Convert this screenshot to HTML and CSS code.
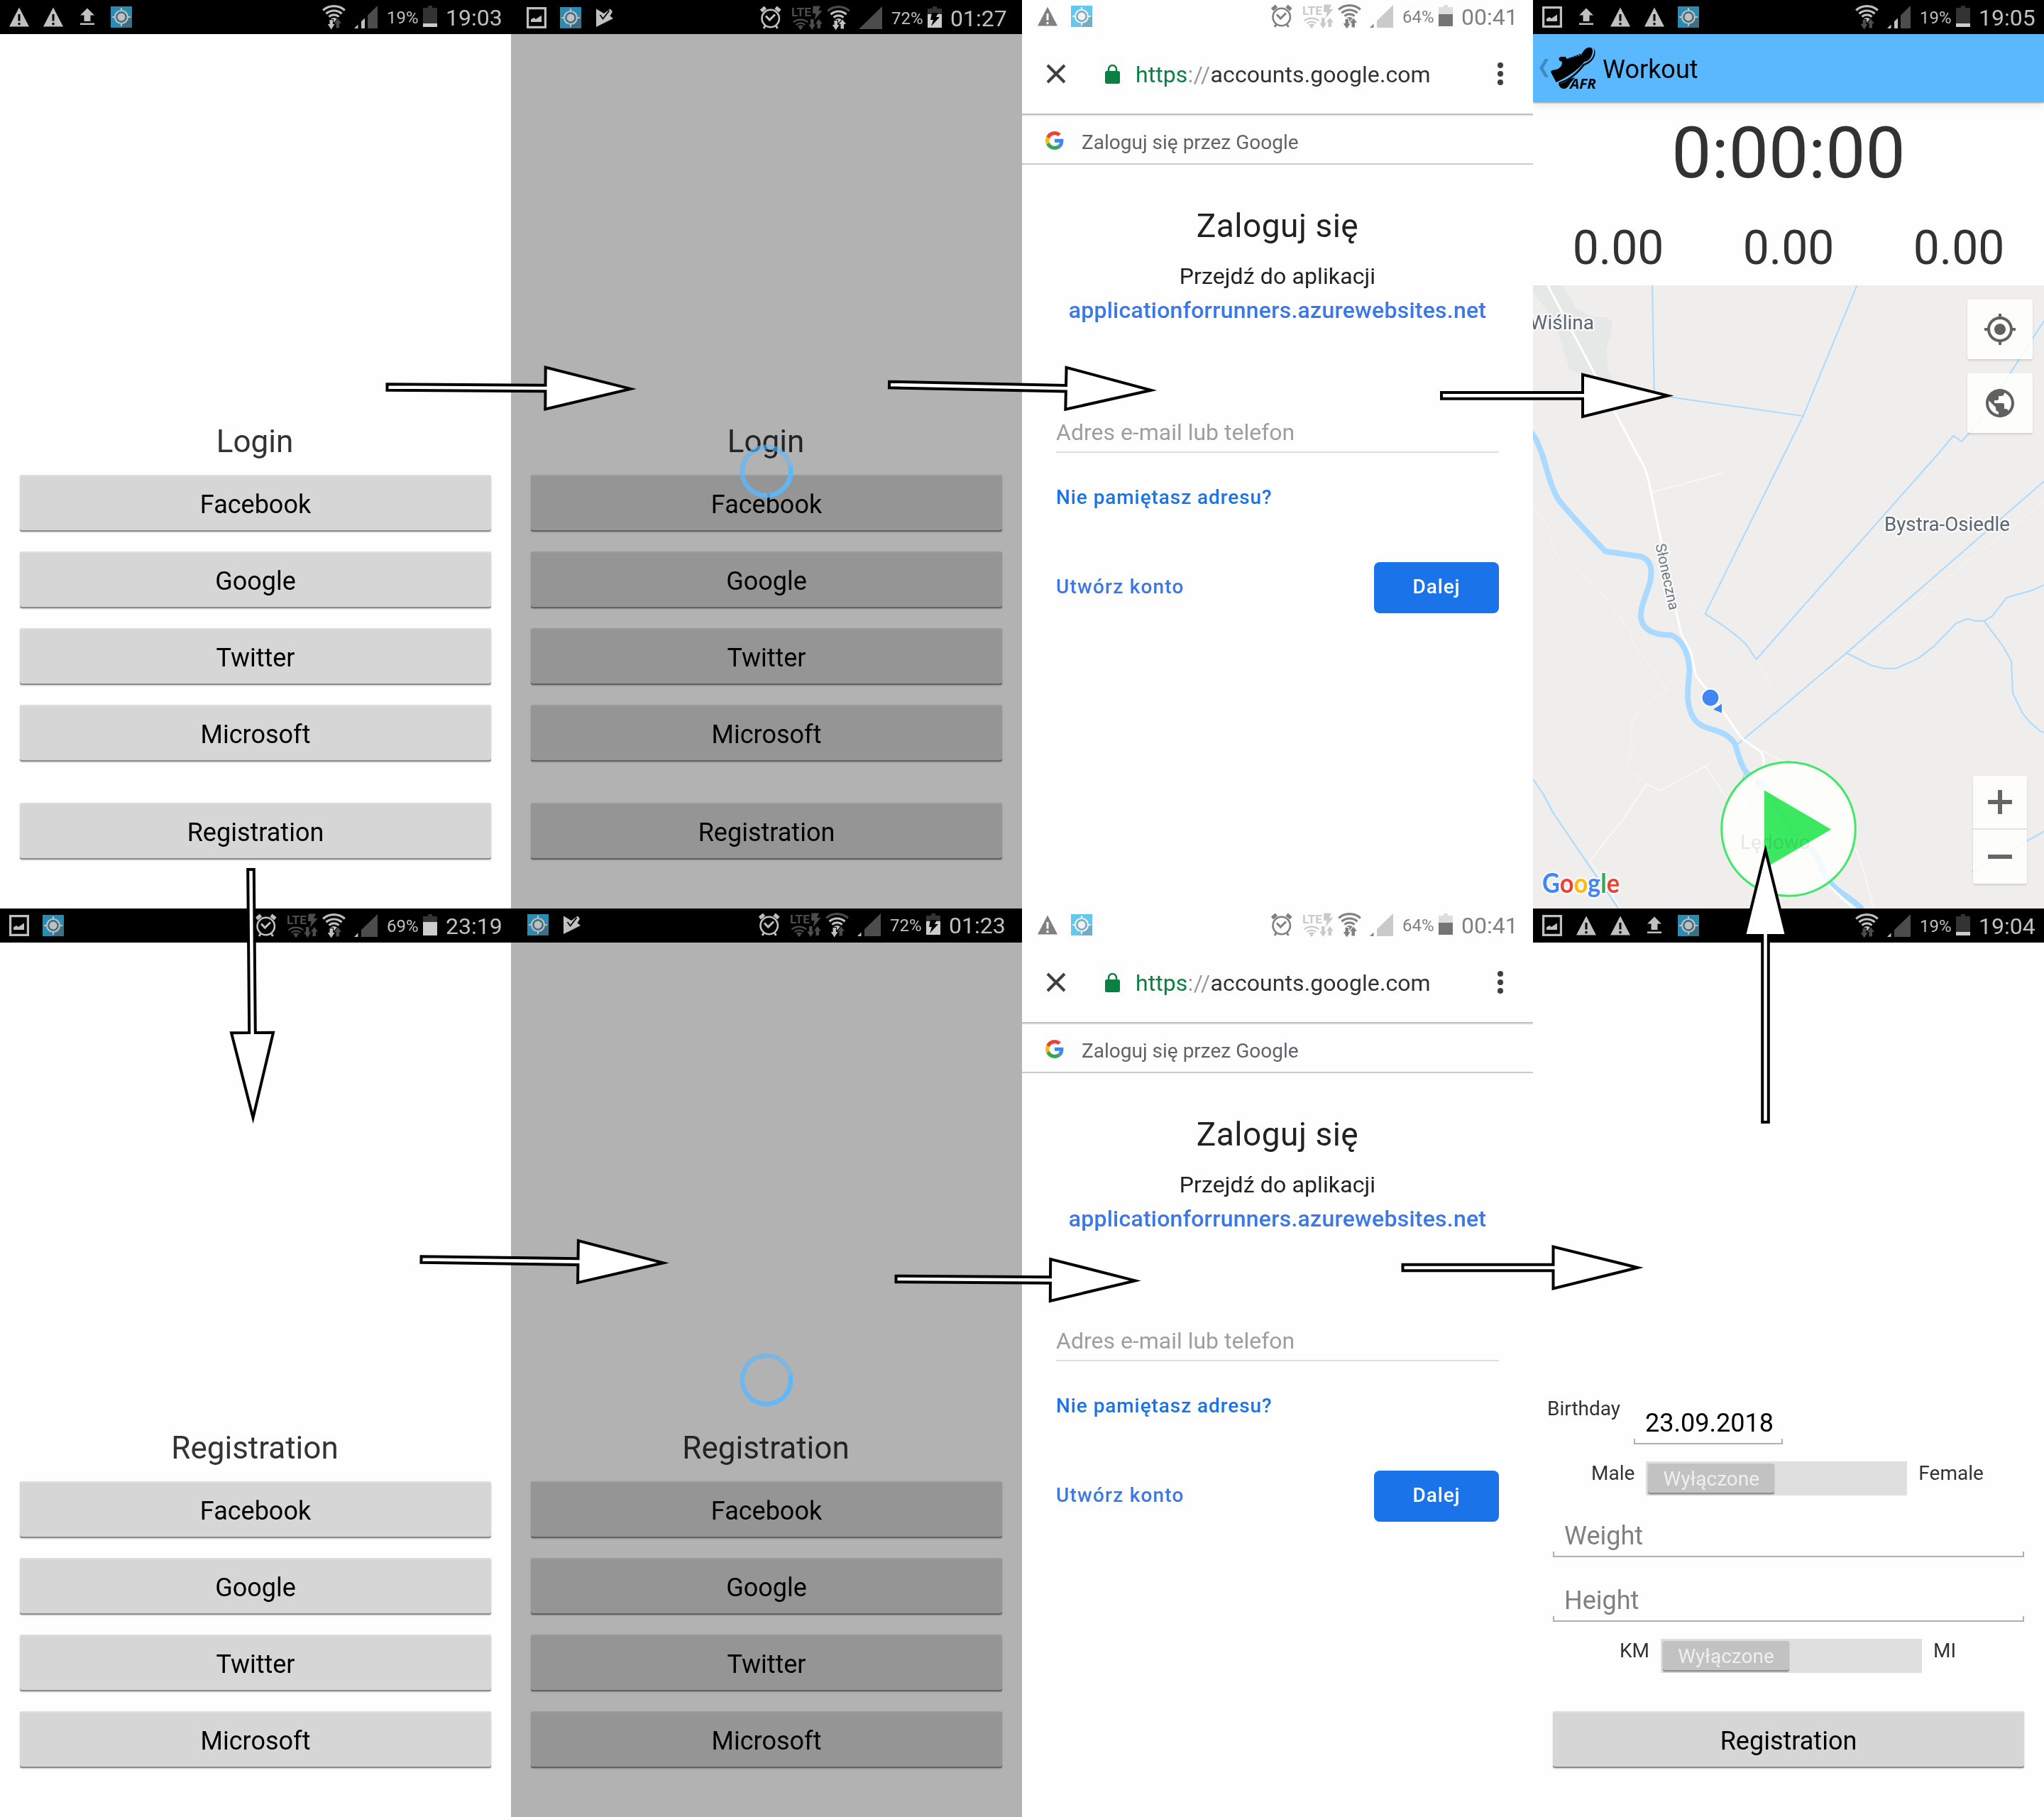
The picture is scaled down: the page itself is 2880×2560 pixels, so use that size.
FILE: index.html
```html
<!DOCTYPE html>
<html lang="pl">
<head>
<meta charset="utf-8">
<title>Application For Runners</title>
<link rel="stylesheet" href="styles.css">
</head>
<body>
<svg class="defs" width="0" height="0">
  <symbol id="warn" viewBox="0 0 36 36"><path fill="currentColor" d="M18 4.5 32 31.5H4z"/><path class="bar-stroke" d="M18 14v9.5M18 26v3.2" stroke-width="3"/></symbol>
  <symbol id="upload" viewBox="0 0 36 36"><path fill="currentColor" d="M18 5.500 28 15.500h-5.500V24h-9v-8.500H8zM8 26.500h20v2.500H8z"/></symbol>
  <symbol id="image" viewBox="0 0 36 36"><path fill="none" stroke="currentColor" stroke-width="3.200" d="M5.600 4.600h24.800v26.800H5.600z"/><path fill="currentColor" d="M10 24v-3.500l4-2.500 3 2 8-5.500V24z"/></symbol>
  <symbol id="target" viewBox="0 0 36 36"><path fill="var(--tile)" d="M3 3h30v30H3z"/><path fill="var(--tile-shade)" d="M24.500 11.500 33 20v13H19l-7.500-8.500z"/><circle cx="18" cy="18" r="9" fill="var(--tile-shade)" stroke="currentColor" stroke-width="2.200"/><circle cx="18" cy="18" r="5.400" fill="currentColor"/><path stroke="currentColor" stroke-width="2.200" d="M18 5v4M18 27v4M5 18h4M27 18h4"/></symbol>
  <symbol id="play" viewBox="0 0 36 36"><path fill="currentColor" d="M6 5.500 17 12l9-6.500 3 4-3.500 6 4.500 3.500L6 31z"/><path class="bar-stroke" fill="none" stroke-width="1.800" d="m11.500 14 4 5.500L24.500 8"/></symbol>
  <symbol id="alarm" viewBox="0 0 30 48"><g fill="none" stroke="currentColor"><circle cx="14.700" cy="25" r="12.200" stroke-width="2.600"/><path stroke-width="3" d="m8 21.500 5.300 5.500L21 19.500"/><path stroke-width="5" d="M1.500 14.500 7.500 9.500M28 14.500 22 9.500"/><path stroke-width="3" d="m7.500 35-2.500 4M22 35l2.500 4"/></g></symbol>
  <symbol id="lte" viewBox="0 0 44 48"><g fill="var(--dim)"><text class="lte-text" x="0" y="21.700" textLength="28" lengthAdjust="spacingAndGlyphs">LTE</text><path d="M30.500 7.500H41L38 14h5.500L32.700 27l2-9H30zM27 26h4.500v7.500H34L29.300 41l-5-7.500H27zM36.500 39v-6.500H34L38.800 26l5 6.500H41V39z"/><circle cx="13" cy="38.500" r="2"/></g><g fill="none" stroke="var(--dim)" stroke-width="2.200"><path d="M2.700 30.500a15.500 15.500 0 0 1 20.600 0M6.500 34a10 10 0 0 1 13 0M9.500 36.800a6 6 0 0 1 7 0"/></g></symbol>
  <symbol id="wifi" viewBox="0 0 33 48"><g fill="none" stroke="currentColor" stroke-width="3.200"><path stroke="var(--outer, currentColor)" d="M1.200 14.500a23 23 0 0 1 30.600 0"/><path d="M5.500 19.200a16.500 16.500 0 0 1 22 0M9.500 23.600a10.500 10.500 0 0 1 14 0"/></g><path fill="currentColor" d="M11.500 27a8 8 0 0 1 10 0l-5 4.500z"/><path class="bar-stroke" stroke-width="2" fill="var(--down, currentColor)" paint-order="stroke" d="M10.500 28H15v6h2.600L12.700 41.500l-5-7.500h2.800z"/><path class="bar-stroke" stroke-width="2" fill="var(--up, currentColor)" paint-order="stroke" d="M19.500 39.500v-6.500H17L22 26.500l5 6.500h-3v6.500z"/></symbol>
  <symbol id="sig0" viewBox="0 0 33 48"><path fill="var(--dim)" d="M0 40 33 8v32z"/></symbol>
  <symbol id="sig1" viewBox="0 0 33 48"><path fill="var(--dim)" d="M10 30.300 33 8v32H10z"/><path fill="currentColor" d="M0 40l5.500-5.400V40z"/></symbol>
  <symbol id="sig2" viewBox="0 0 33 48"><path fill="var(--dim)" d="M19 21.600 33 8v32H19z"/><path fill="currentColor" d="M0 40l5.500-5.400V40zM10 40v-9.700l5-4.800V40z"/></symbol>
  <symbol id="bolt" viewBox="0 0 20 48"><path class="bolt" d="M6 17h9l-3 6h5L5 36l3-9H4z"/></symbol>
  <symbol id="glogo" viewBox="0 0 48 48"><path fill="#ea4335" d="M24 9.500c3.540 0 6.710 1.220 9.210 3.600l6.850-6.850C35.900 2.380 30.470 0 24 0 14.620 0 6.510 5.380 2.560 13.220l7.980 6.190C12.430 13.720 17.740 9.500 24 9.500z"/><path fill="#4285f4" d="M46.980 24.550c0-1.570-.15-3.090-.38-4.550H24v9.020h12.940c-.58 2.960-2.260 5.480-4.780 7.180l7.730 6c4.510-4.180 7.090-10.360 7.090-17.650z"/><path fill="#fbbc05" d="M10.530 28.590c-.48-1.450-.76-2.990-.76-4.590s.27-3.140.76-4.590l-7.980-6.190C.92 16.460 0 20.120 0 24c0 3.880.92 7.540 2.560 10.780l7.970-6.190z"/><path fill="#34a853" d="M24 48c6.480 0 11.930-2.130 15.890-5.810l-7.730-6c-2.150 1.450-4.920 2.300-8.160 2.300-6.260 0-11.570-4.220-13.470-9.910l-7.980 6.190C6.510 42.620 14.620 48 24 48z"/></symbol>
</svg>

<main class="board">
  <!-- Login -->
  <section class="phone">
    <header class="status">
      <div class="notes"><svg><use href="#warn"/></svg><svg><use href="#warn"/></svg><svg><use href="#upload"/></svg><svg><use href="#target"/></svg></div>
      <div class="sys"><svg class="wifi up-dim"><use href="#wifi"/></svg><svg class="sig"><use href="#sig2"/></svg><span class="pct">19%</span><span class="batt b19"></span><span class="time">19:03</span></div>
    </header>
    <div class="choices">
      <h1 class="heading">Login</h1>
      <button class="btn">Facebook</button><button class="btn">Google</button><button class="btn">Twitter</button><button class="btn">Microsoft</button>
      <button class="btn apart">Registration</button>
    </div>
  </section>

  <!-- Login, loading -->
  <section class="phone dimmed">
    <header class="status low shift">
      <div class="notes"><svg><use href="#image"/></svg><svg><use href="#target"/></svg><svg><use href="#play"/></svg></div>
      <div class="sys"><svg class="alarm"><use href="#alarm"/></svg><svg class="lte"><use href="#lte"/></svg><svg class="wifi outer-dim"><use href="#wifi"/></svg><svg class="sig"><use href="#sig0"/></svg><span class="pct">72%</span><span class="batt b72"><svg><use href="#bolt"/></svg></span><span class="time">01:27</span></div>
    </header>
    <div class="choices">
      <h1 class="heading">Login</h1>
      <button class="btn">Facebook</button><button class="btn">Google</button><button class="btn">Twitter</button><button class="btn">Microsoft</button>
      <button class="btn apart">Registration</button>
    </div>
    <div class="spinner"></div>
  </section>

  <!-- Google account, login -->
  <section class="phone">
    <header class="status light high shift">
      <div class="notes"><svg><use href="#warn"/></svg><svg><use href="#target"/></svg></div>
      <div class="sys"><svg class="alarm"><use href="#alarm"/></svg><svg class="lte"><use href="#lte"/></svg><svg class="wifi"><use href="#wifi"/></svg><svg class="sig"><use href="#sig1"/></svg><span class="pct">64%</span><span class="batt b64"></span><span class="time">00:41</span></div>
    </header>
    <div class="toolbar">
      <svg class="close" viewBox="0 0 28 28"><path d="m2 2 24 24M26 2 2 26"/></svg>
      <svg class="lock" viewBox="0 0 21 27"><rect y="9" width="21" height="18" rx="2.500"/><path d="M5 10V6.500a5.500 5.500 0 0 1 11 0V10"/></svg>
      <p class="url"><span class="scheme">https</span><span class="slashes">://</span>accounts.google.com</p>
      <svg class="dots" viewBox="0 0 8 32"><circle cx="4" cy="4" r="4"/><circle cx="4" cy="16" r="4"/><circle cx="4" cy="28" r="4"/></svg>
    </div>
    <div class="provider"><svg><use href="#glogo"/></svg><span>Zaloguj się przez Google</span></div>
    <div class="account">
      <h1>Zaloguj się</h1>
      <p class="sub">Przejdź do aplikacji</p>
      <p class="site">applicationforrunners.azurewebsites.net</p>
      <div class="email">Adres e-mail lub telefon</div>
      <p class="forgot">Nie pamiętasz adresu?</p>
      <div class="actions"><span class="create">Utwórz konto</span><button class="next">Dalej</button></div>
    </div>
  </section>

  <!-- Workout -->
  <section class="phone">
    <header class="status">
      <div class="notes"><svg><use href="#image"/></svg><svg><use href="#upload"/></svg><svg><use href="#warn"/></svg><svg><use href="#warn"/></svg><svg><use href="#target"/></svg></div>
      <div class="sys"><svg class="wifi up-dim down-dim"><use href="#wifi"/></svg><svg class="sig"><use href="#sig2"/></svg><span class="pct">19%</span><span class="batt b19"></span><span class="time">19:05</span></div>
    </header>
    <div class="appbar">
      <svg class="back" viewBox="0 0 14 28"><path d="M8.500 0H14L6 14l8 14H8.500L0 14z"/></svg>
      <svg class="shoe" viewBox="75 198 195 180">
        <path d="M110 246c2-8 16-6 28-6l4 9 66-25c8-12 16-24 32-24 12 0 14 12 10 28-5 20-18 30-34 34-14 20-50 55-118 86L76 306c-2-10 10-9 22-12 18-6 28-20 24-34-8-1-14-6-12-14z"/>
        <path class="laces" d="m147 234 3 13M158 231l3 13M169 229l3 13M180 226l3 13M191 224l3 13M201 220l3 13"/>
        <path d="M257 203c9 15 8 35-9 54-10 11-22 15-32 21-22 30-56 62-106 76l-2-5c44-14 78-42 104-78 12-6 22-9 32-19 13-14 17-32 13-49z"/>
        <path d="M108 354c18-2 34-12 50-22l18-4c-10 16-18 20-24 32-8 16-24 18-34 11-6-4-8-10-10-17z"/>
        <text x="157" y="375" textLength="110" lengthAdjust="spacingAndGlyphs">AFR</text>
      </svg>
      <h1>Workout</h1>
    </div>
    <div class="clock">0:00:00</div>
    <div class="stats"><span>0.00</span><span>0.00</span><span>0.00</span></div>
    <div class="map">
      <svg class="tiles" viewBox="0 402 720 878">
        <g transform="translate(0 640) scale(.45918 .40816)" fill="none" stroke-linejoin="round">
          <path fill="#e6e7e7" d="M0-583h92l38 75q25 20 60 35h35l17 12v30l-17 70 5 70 20 40-90-20-48-20-32-120-40-90-40-57z"/>
          <g class="path">
            <path d="m0 175 48 75 10 60 17 40 115 100 110 165 10 40 103 160-60 40q-40 40-50 75l-3 40 5 50-20 50 20 30 45 38M445 490l83 61M685 708l50 105M1568 165 770 868M528 1077l92-74"/>
          </g>
          <g class="lane">
            <path d="m362 132 218-66M268 1568l-93-164 105-149 70-117 40 23 138-84 62 103q25 35 75 40M700 1022l70 38 140 50 35 70 45 180 25 80 30 128"/>
          </g>
          <g class="water">
            <path d="m366-583 6 378 457 73M994-583 829-132 771 0 528 551q100 70 132 114l25 43L1242 0l48-64 25 20 25-31 60-90 90-160 78-135M1568 93 962 686 770 868 625 1003M962 686l76 43 37 10h40l68-35 47-41 68-79 34-16 25 7h27l25-16 44-64 80-26 35-18M1384 575l59 89 25 51 4 110 31 70 20 28 34 34 11 3M0 1122l30 48 30 65 100 165 102 168M1347 1442l221-140M650 1100l-12 40-15 42"/>
          </g>
          <path class="river" d="M-14-90 10-50 28 0C45 60 55 115 80 160c40 55 95 120 142 175l108 18c35 12 36 50 30 85-10 45-35 95-28 132 8 40 40 52 93 55 35 15 55 70 55 125-5 60-12 110 10 155 30 60 90 30 130 95 12 45 20 80 40 105l40 35c60 60 70 160 150 220 40 40 30 90 80 140 30 25 60 45 80 70"/>
          <path class="road" d="M45-583 320 0c30 55 32 80 42 130l33 180 45 235 15 75 30 65 15 80 60 85 80 130 60 48c15 30 8 65-20 95-30 30-45 60-20 95l55 67 270 285"/>
        </g>
        <g class="labels">
          <text x="86" y="463.500" text-anchor="end">Wiślina</text>
          <text x="495" y="748" textLength="177" lengthAdjust="spacingAndGlyphs">Bystra-Osiedle</text>
          <text class="street" transform="translate(172.500 767.500) rotate(78)">Słoneczna</text>
          <text x="292" y="1195.500">Lędowo</text>
        </g>
        <circle cx="250" cy="983" r="12.300" fill="#4285f4" stroke="#fff" stroke-width="1.800"/>
        <path fill="#4285f4" d="m266 991.500v13l-12-5z"/>
        <text class="brand" x="13" y="1258" textLength="109" lengthAdjust="spacingAndGlyphs"><tspan fill="#4285f4">G</tspan><tspan fill="#ea4335">o</tspan><tspan fill="#fbbc05">o</tspan><tspan fill="#4285f4">g</tspan><tspan fill="#34a853">l</tspan><tspan fill="#ea4335">e</tspan></text>
        <circle class="start-ring" cx="360" cy="1168" r="94.300"/>
        <path class="start-arrow" d="m326 1113.500 94 55-94 55z"/>
      </svg>
      <div class="mapbtn locate"><svg viewBox="0 0 24 24"><path d="M12 8c-2.210 0-4 1.790-4 4s1.790 4 4 4 4-1.790 4-4-1.790-4-4-4zm8.940 3c-.46-4.170-3.770-7.480-7.940-7.940V1h-2v2.060C6.830 3.520 3.520 6.830 3.060 11H1v2h2.060c.46 4.170 3.770 7.480 7.940 7.940V23h2v-2.060c4.170-.46 7.480-3.770 7.940-7.940H23v-2h-2.060zM12 19c-3.870 0-7-3.130-7-7s3.130-7 7-7 7 3.130 7 7-3.130 7-7 7z"/></svg></div>
      <div class="mapbtn globe"><svg viewBox="0 0 24 24"><path d="M12 2C6.480 2 2 6.480 2 12s4.480 10 10 10 10-4.480 10-10S17.520 2 12 2zm-1 17.930c-3.950-.49-7-3.850-7-7.930 0-.62.08-1.210.21-1.790L9 15v1c0 1.100.9 2 2 2v1.930zm6.900-2.540c-.26-.81-1-1.390-1.900-1.390h-1v-3c0-.55-.45-1-1-1H8v-2h2c.55 0 1-.45 1-1V7h2c1.100 0 2-.9 2-2v-.41c2.930 1.190 5 4.060 5 7.410 0 2.080-.8 3.970-2.100 5.390z"/></svg></div>
      <div class="zoom"><span class="plus"></span><span class="minus"></span></div>
    </div>
  </section>

  <!-- Registration -->
  <section class="phone">
    <header class="status">
      <div class="notes"><svg><use href="#image"/></svg><svg><use href="#target"/></svg></div>
      <div class="sys"><svg class="alarm"><use href="#alarm"/></svg><svg class="lte"><use href="#lte"/></svg><svg class="wifi up-dim"><use href="#wifi"/></svg><svg class="sig"><use href="#sig1"/></svg><span class="pct">69%</span><span class="batt b69"></span><span class="time">23:19</span></div>
    </header>
    <div class="choices">
      <h1 class="heading">Registration</h1>
      <button class="btn">Facebook</button><button class="btn">Google</button><button class="btn">Twitter</button><button class="btn">Microsoft</button>
    </div>
  </section>

  <!-- Registration, loading -->
  <section class="phone dimmed">
    <header class="status high shift-more">
      <div class="notes"><svg><use href="#target"/></svg><svg><use href="#play"/></svg></div>
      <div class="sys"><svg class="alarm"><use href="#alarm"/></svg><svg class="lte"><use href="#lte"/></svg><svg class="wifi outer-dim up-dim"><use href="#wifi"/></svg><svg class="sig"><use href="#sig1"/></svg><span class="pct">72%</span><span class="batt b72"><svg><use href="#bolt"/></svg></span><span class="time">01:23</span></div>
    </header>
    <div class="choices">
      <h1 class="heading">Registration</h1>
      <button class="btn">Facebook</button><button class="btn">Google</button><button class="btn">Twitter</button><button class="btn">Microsoft</button>
    </div>
    <div class="spinner"></div>
  </section>

  <!-- Google account, registration -->
  <section class="phone">
    <header class="status light high shift">
      <div class="notes"><svg><use href="#warn"/></svg><svg><use href="#target"/></svg></div>
      <div class="sys"><svg class="alarm"><use href="#alarm"/></svg><svg class="lte"><use href="#lte"/></svg><svg class="wifi"><use href="#wifi"/></svg><svg class="sig"><use href="#sig1"/></svg><span class="pct">64%</span><span class="batt b64"></span><span class="time">00:41</span></div>
    </header>
    <div class="toolbar">
      <svg class="close" viewBox="0 0 28 28"><path d="m2 2 24 24M26 2 2 26"/></svg>
      <svg class="lock" viewBox="0 0 21 27"><rect y="9" width="21" height="18" rx="2.500"/><path d="M5 10V6.500a5.500 5.500 0 0 1 11 0V10"/></svg>
      <p class="url"><span class="scheme">https</span><span class="slashes">://</span>accounts.google.com</p>
      <svg class="dots" viewBox="0 0 8 32"><circle cx="4" cy="4" r="4"/><circle cx="4" cy="16" r="4"/><circle cx="4" cy="28" r="4"/></svg>
    </div>
    <div class="provider"><svg><use href="#glogo"/></svg><span>Zaloguj się przez Google</span></div>
    <div class="account">
      <h1>Zaloguj się</h1>
      <p class="sub">Przejdź do aplikacji</p>
      <p class="site">applicationforrunners.azurewebsites.net</p>
      <div class="email">Adres e-mail lub telefon</div>
      <p class="forgot">Nie pamiętasz adresu?</p>
      <div class="actions"><span class="create">Utwórz konto</span><button class="next">Dalej</button></div>
    </div>
  </section>

  <!-- Runner details -->
  <section class="phone">
    <header class="status">
      <div class="notes"><svg><use href="#image"/></svg><svg><use href="#warn"/></svg><svg><use href="#warn"/></svg><svg><use href="#upload"/></svg><svg><use href="#target"/></svg></div>
      <div class="sys"><svg class="wifi up-dim down-dim"><use href="#wifi"/></svg><svg class="sig"><use href="#sig1"/></svg><span class="pct">19%</span><span class="batt b19"></span><span class="time">19:04</span></div>
    </header>
    <div class="details">
      <div class="row birthday"><label>Birthday</label><div class="field date">23.09.2018</div></div>
      <div class="row sex"><label>Male</label><div class="switch"><span>Wyłączone</span></div><label>Female</label></div>
      <div class="field weight">Weight</div>
      <div class="field height">Height</div>
      <div class="row unit"><label>KM</label><div class="switch"><span>Wyłączone</span></div><label>MI</label></div>
      <button class="btn">Registration</button>
    </div>
  </section>

  <!-- Flow arrows between the screens -->
  <svg class="arrows" viewBox="0 0 2880 2560">
    <path transform="translate(545.500 545.500) rotate(.4)" d="M0-4.300H223V-29.500L343 0 223 29.500V4.300H0z"/>
    <path transform="translate(1253 542) rotate(1.200)" d="M0-4.300H249V-29.500L369 0 249 29.500V4.300H0z"/>
    <path transform="translate(2031 557.400)" d="M0-4.300H199V-29.500L319 0 199 29.500V4.300H0z"/>
    <path transform="translate(353.500 1225) rotate(89.500)" d="M0-4.300H230V-29.500L350 0 230 29.500V4.300H0z"/>
    <path transform="translate(2487.500 1581) rotate(-90)" d="M0-4.300H263V-29.500L383 0 263 29.500V4.300H0z"/>
    <path transform="translate(593.500 1774.500) rotate(.8)" d="M0-4.300H221V-29.500L341 0 221 29.500V4.300H0z"/>
    <path transform="translate(1262.500 1802) rotate(.4)" d="M0-4.300H217.500V-29.500L337 0 217.500 29.500V4.300H0z"/>
    <path transform="translate(1976.500 1786)" d="M0-4.300H212V-29.500L331 0 212 29.500V4.300H0z"/>
  </svg>
</main>
</body>
</html>
```
FILE: styles.css
```css
* { box-sizing: border-box; margin: 0; }
body { background: #fff; font-family: Roboto, "Noto Sans", sans-serif; font-weight: 400; }
button { border: 0; font: inherit; padding: 0; }
.defs { display: none; }

.board {
  position: relative;
  display: grid;
  grid-template-columns: repeat(4, 720px);
  grid-template-rows: repeat(2, 1280px);
  width: 2880px;
}
.phone { position: relative; display: flex; flex-direction: column; overflow: hidden; background: #fefefe; }
.phone.dimmed { background: #b2b2b2; }

/* Status bar */
.status {
  --bar: #000;
  --dim: #4c4c4c;
  --tile: #2a8bb3;
  --tile-shade: #3d6f85;
  --level: #ccc;
  --empty: #333;
  flex: none;
  display: flex;
  justify-content: space-between;
  height: 48px;
  padding: 0 12px 0 3px;
  background: var(--bar);
  color: #c0c0c0;
}
.status.light {
  --bar: #fefefe;
  --dim: #cacaca;
  --tile: #62c8f0;
  --tile-shade: #73abc4;
  --level: #757575;
  --empty: #dedede;
  color: #808080;
}
.status.light .notes svg:last-child { color: #f2f2f2; }
.status.shift { padding-left: 12px; padding-right: 21px; }
.status.shift-more { padding-left: 14px; padding-right: 23px; }
.status.low > div { margin-top: 1px; }
.status.high > div { margin-top: -1px; }
.notes { display: flex; gap: 12px; padding: 6px; }
.notes svg { width: 36px; height: 36px; }
.sys { display: flex; height: 48px; }
.sys > svg { height: 48px; }
.alarm { width: 30px; margin-right: 14px; }
.lte { width: 44px; margin-right: 6px; }
.wifi { width: 33px; margin-right: 12px; }
.sig { width: 33px; margin-right: 13px; }
.up-dim { --up: var(--dim); }
.down-dim { --down: var(--dim); }
.outer-dim { --outer: var(--dim); }
.bar-stroke { stroke: var(--bar); }
.lte-text { font: 700 16.5px Roboto, sans-serif; }
.pct { width: 43px; margin-right: 8px; font-size: 24px; line-height: 51px; white-space: nowrap; }
.time { width: 80px; font-size: 32px; line-height: 50px; white-space: nowrap; }
.batt {
  position: relative;
  width: 20px;
  height: 27px;
  margin: 11px 12px 0 0;
  background: linear-gradient(to top, var(--level) var(--charge), var(--empty) var(--charge));
}
.batt::before { content: ""; position: absolute; left: 7px; top: -3px; width: 6px; height: 3px; background: var(--empty); }
.batt svg { position: absolute; left: 0; top: -11px; width: 20px; height: 48px; }
.bolt { fill: #000; }
.b19 { --charge: 19%; }
.b64 { --charge: 64%; }
.b69 { --charge: 69%; }
.b72 { --charge: 72%; }

/* Provider choice */
.choices { flex: 1; display: flex; flex-direction: column; justify-content: flex-end; gap: 28px; padding: 0 28px 69px; }
.heading { height: 40px; padding-right: 2px; font-size: 44px; font-weight: 400; line-height: 42px; text-align: center; color: #333; }
.dimmed .heading { color: #242424; }
.btn {
  width: 664px;
  height: 80px;
  border-radius: 3px;
  background: #d6d6d6;
  box-shadow: inset 0 -2px #8c8c8c, inset 0 2px #dedede, 0 1px 2px rgba(0, 0, 0, .22);
  color: #000;
  font-size: 36px;
  line-height: 84px;
  text-align: center;
}
.btn.apart { margin-top: 30px; }
.dimmed .btn { background: #959595; box-shadow: inset 0 -2px #626262, inset 0 2px #9b9b9b, 0 1px 2px rgba(0, 0, 0, .22); }
.spinner {
  position: absolute;
  left: 322px;
  top: 626px;
  width: 76px;
  height: 76px;
  border-radius: 50%;
  background: conic-gradient(from 78deg, #5ab8ff, rgba(90, 184, 255, .5));
  mask: radial-gradient(circle closest-side, transparent 80%, #000 82%, #000 98%, transparent 100%);
}

/* Google account page */
.toolbar { flex: none; display: flex; align-items: center; height: 112px; padding: 0 42px 0 34px; }
.close { width: 28px; height: 28px; fill: none; stroke: #3c4043; stroke-width: 4; }
.lock { width: 21px; height: 27px; margin-left: 55px; fill: #0b8043; }
.lock path { fill: none; stroke: #0b8043; stroke-width: 2.5; }
.url { margin-left: 22px; padding-top: 2px; font-size: 32px; line-height: 40px; letter-spacing: .08px; color: #303134; }
.scheme { color: #0b8043; }
.slashes { letter-spacing: .5px; color: #999; }
.dots { width: 8px; height: 32px; margin-left: auto; fill: #3c4043; }
.provider {
  flex: none;
  display: flex;
  align-items: center;
  height: 72px;
  padding: 4px 0 0 33px;
  border-top: 2px solid #c2c2c2;
  border-bottom: 2px solid #cacaca;
  box-shadow: inset 0 2px 2px -1px #ddd;
  color: #5f6368;
  font-size: 28px;
  line-height: 36px;
}
.provider svg { width: 26px; height: 26px; margin-right: 25px; }
.provider span { padding-top: 5px; }
.account { display: flex; flex-direction: column; padding: 56px 48px 0; }
.account h1 { font-size: 46px; font-weight: 400; line-height: 60px; letter-spacing: .5px; text-align: center; color: #202124; }
.sub { margin-top: 17px; font-size: 32px; line-height: 48px; letter-spacing: .12px; text-align: center; color: #202124; }
.site { font-size: 32px; font-weight: 500; line-height: 48px; letter-spacing: .24px; text-align: center; color: #3b78e7; }
.email { height: 58px; margin-top: 119px; border-bottom: 2px solid #dedede; font-size: 32px; line-height: 58px; color: #9e9e9e; }
.forgot { margin-top: 43px; font-size: 28px; font-weight: 500; line-height: 40px; letter-spacing: .92px; color: #1a73e8; }
.actions { display: flex; align-items: center; justify-content: space-between; margin-top: 71px; font-size: 28px; font-weight: 500; }
.create { padding-bottom: 4px; letter-spacing: 1.2px; color: #3b78e7; }
.next { width: 176px; height: 72px; padding-bottom: 4px; border-radius: 8px; background: #1a73e8; color: #fff; letter-spacing: .9px; }

/* Workout */
.appbar { flex: none; position: relative; z-index: 1; display: flex; align-items: center; height: 96px; padding-left: 9px; background: #5ab8ff; box-shadow: 0 1px 2px rgba(0, 0, 0, .35), 0 6px 10px rgba(0, 0, 0, .07); }
.back { width: 13px; height: 28px; fill: #4389bd; }
.shoe { width: 65px; height: 60px; margin-left: 3px; overflow: visible; }
.shoe text { font: italic 700 60px "Open Sans", sans-serif; }
.laces { stroke: #5ab8ff; stroke-width: 3.5; }
.appbar h1 { margin-left: 8px; padding-top: 4px; font-size: 36px; font-weight: 400; line-height: 92px; }
.clock { height: 140px; font-size: 100px; line-height: 143px; text-align: center; color: #323232; }
.stats { display: grid; grid-template-columns: repeat(3, 1fr); height: 118px; font-size: 66px; line-height: 132px; text-align: center; color: #323232; }
.map { position: relative; flex: 1; background: #efeeec; overflow: hidden; }
.tiles { display: block; width: 720px; height: 878px; }
.tiles path { vector-effect: non-scaling-stroke; }
.water { stroke: #aadaff; stroke-width: 2; }
.river { stroke: #aadaff; stroke-width: 8; }
.road { stroke: #fff; stroke-width: 3; }
.lane { stroke: #fafafa; stroke-width: 1.5; }
.path { stroke: #f5f4f3; stroke-width: 1.2; }
.labels { font-size: 28px; fill: #5b6470; stroke: #f8f8f8; stroke-width: 5; stroke-linejoin: round; paint-order: stroke; }
.street { font-size: 20.5px; fill: #6f777e; }
.brand { font: 700 38px Lato, sans-serif; stroke: #f8f8f8; stroke-width: 5; stroke-linejoin: round; paint-order: stroke; }
.mapbtn, .zoom { position: absolute; border-radius: 3px; background: rgba(255, 255, 253, .87); box-shadow: 0 2px 3px rgba(0, 0, 0, .13); }
.mapbtn { right: 16px; display: grid; place-items: center; width: 92px; height: 84px; }
.mapbtn svg { width: 48px; height: 48px; fill: #616161; }
.locate { top: 20px; }
.globe { top: 124px; }
.zoom { right: 24px; top: 691px; display: grid; grid-template-rows: 1fr 1fr; width: 76px; height: 152px; }
.zoom .plus { border-bottom: 2px solid #e2e2e2; background: linear-gradient(#666, #666) center / 34px 6px no-repeat, linear-gradient(#666, #666) center / 6px 34px no-repeat; }
.zoom .minus { background: linear-gradient(#666, #666) center / 34px 6px no-repeat; }
.start-ring { fill: rgba(255, 255, 253, .85); stroke: #42e669; stroke-width: 3; }
.start-arrow { fill: #3beb62; mix-blend-mode: multiply; }

/* Runner details */
.details { flex: 1; display: flex; flex-direction: column; padding: 640px 28px 0; }
.row { display: flex; color: #333; font-size: 28px; line-height: 34px; }
.birthday { height: 67px; margin-left: -8px; }
.field { height: 60px; padding: 8px 16px 0; font-size: 36px; line-height: 44px; color: #808080;
  background: linear-gradient(#b0b0b0, #b0b0b0) bottom / 100% 2px no-repeat, linear-gradient(#b0b0b0, #b0b0b0) left bottom / 2px 8px no-repeat, linear-gradient(#b0b0b0, #b0b0b0) right bottom / 2px 8px no-repeat; }
.date { width: 210px; height: 67px; margin-left: 19px; padding-top: 15px; color: #000; }
.sex { margin: 24px 0 0 54px; }
.unit { margin: 24px 0 54px 94px; }
.switch { width: 368px; height: 48px; margin: 0 16px; padding: 3px; background: #dfdfdf; }
.switch span { display: block; width: 178px; height: 43px; border-radius: 3px; background: #c2c2c2; box-shadow: inset 0 -2px #8f8f8f, 0 1px 2px rgba(0, 0, 0, .2); color: #efefef; line-height: 44px; text-align: center; }
.weight { margin-top: 27px; }
.height { margin-top: 31px; }

.arrows { position: absolute; inset: 0; width: 2880px; height: 2560px; fill: #fff; stroke: #000; stroke-width: 4; stroke-miterlimit: 20; }
```
